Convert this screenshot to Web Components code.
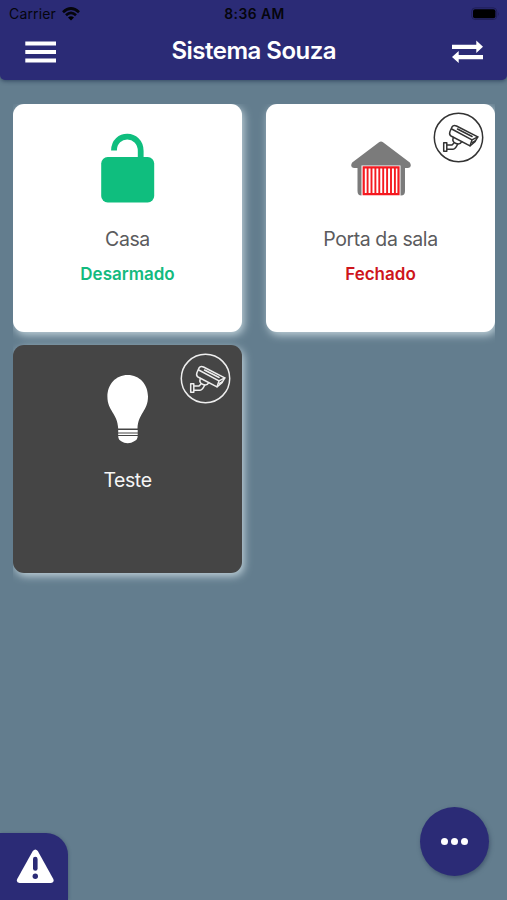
<!DOCTYPE html>
<html lang="pt-BR"><head><meta charset="utf-8"><title>Sistema Souza</title>
<style>html,body{margin:0;height:100%}body{overflow:hidden;font-family:Inter,"Liberation Sans",sans-serif}</style></head>
<body>
<home-app></home-app>
<script>
const define = (name, html) => customElements.define(name, class extends HTMLElement {
  constructor() {
    super();
    const t = document.createElement('template');
    t.innerHTML = html;
    this.attachShadow({mode: 'open'}).append(t.content.cloneNode(true));
  }
});

define('status-bar', `<style>
:host{display:grid;grid-template-columns:1fr auto 1fr;align-items:center;height:27px;padding:0 7px 0 9px;color:#05050c;font-size:14px}
.l{display:flex;align-items:center;gap:6px;letter-spacing:.15px}.c{font-weight:600;font-size:13.800px;letter-spacing:.5px}.r{justify-self:end;display:flex}
svg{display:block}
</style>
<div class="l"><span>Carrier</span><svg width="18" height="14" viewBox="0 0 18 14"><g fill="none" stroke="#05050c" stroke-width="2.700"><path d="M1 5.200Q9-2.200 17 5.200"/><path d="M4 8.300Q9 3.600 14 8.300"/></g><path d="M6 10.400Q9 8 12 10.400L9 13.600Z"/></svg></div>
<span class="c">8:36 AM</span>
<svg class="r" width="29" height="14" viewBox="0 0 29 14"><rect x=".7" y=".9" width="25" height="11.600" rx="3.400" fill="none" stroke="#201f58"/><rect x="2" y="2.300" width="22.400" height="9" rx="2" fill="#000"/><path d="M27 5v4q1.500-2 0-4" fill="#201f58"/></svg>`);

define('nav-bar', `<style>
:host{display:grid;grid-template-columns:1fr auto 1fr;align-items:start;box-sizing:border-box;height:53px;padding:8px 24.500px 0 25px}
h1{margin:1px 0 0;color:#fff;font-size:24px;font-weight:600;line-height:30px;letter-spacing:-.5px}
svg{display:block}.l{margin-top:6px}.r{justify-self:end;margin-top:5px}
</style>
<svg class="l" width="32" height="24" viewBox="0 0 32 24"><path d="M.3 2.500H31M.3 11H31M.3 19.500H31" stroke="#fff" stroke-width="3.800"/></svg>
<h1><slot></slot></h1>
<svg class="r" width="31" height="24" viewBox="0 0 31 26" preserveAspectRatio="none" fill="#fff"><path d="M0 5.200H24.300V.5L31 7.300 24.300 14V9.700H0z"/><path d="M31 16.300H6.700V12L0 18.500 6.700 25V20.800H31z"/></svg>`);

define('camera-badge', `<style>:host{display:block;width:51px;height:51px}svg{display:block}</style>
<svg width="51" height="51" viewBox="-25.500 -25.500 51 51" fill="none" stroke="currentColor" stroke-width="1.500" stroke-linejoin="round" stroke-linecap="round">
<circle r="24.200"/>
<path d="M-6.500-10.500Q-5-13-2-11.500L19.300-.7L16.500 4.200L11.500 8.300L-7.500-1.500Q-9.600-2.800-8.600-5.800Z"/>
<path d="M-6.800-8.500L13.500 2.400L19.300-.7M13.500 2.400L11.500 8.300M-1-8.500L13.600-1M14.200 4.800L16.700 3.400"/>
<path d="M-5.200 0Q-6.800 4.500-2.500 6Q1.500 7.500 3.300 4.200"/>
<path d="M-14.800 5.200H-11.700V13.800H-14.800ZM-11.700 7.600H-6.500L-4.500 5.500M-11.700 11.700H-5.500Q-3 11.500-1 7"/></svg>`);

define('device-card', `<style>
:host{display:flex;flex-direction:column;align-items:center;position:relative;box-sizing:border-box;height:228px;padding-top:26px;border-radius:11px;background:#fff;color:#5b5b5d;box-shadow:2px 3px 9px #c0d2da}
:host([dark]){background:#454545;color:#f5f5f5}
.icon{height:80px;display:flex;align-items:center}
.name{margin-top:16px;font-size:19.500px;line-height:27px;letter-spacing:-.42px}
.state{margin-top:9px;font-size:17px;line-height:24px;font-weight:600;color:var(--state)}
.badge{position:absolute;right:11px;top:8px}
</style>
<div class="icon"><slot name="icon"></slot></div><div class="name"><slot></slot></div><div class="state"><slot name="state"></slot></div><div class="badge"><slot name="badge"></slot></div>`);

define('lock-icon', `<style>:host{display:block}svg{display:block}</style>
<svg width="54" height="80" viewBox="0 0 54 80"><rect x=".2" y="27" width="53" height="45.500" rx="6.500" fill="#0fbe7e"/><path d="M13 20.500C13 2 39.700 2 39.700 21V29" fill="none" stroke="#0fbe7e" stroke-width="5.800"/></svg>`);

define('garage-icon', `<style>:host{display:block}svg{display:block}</style>
<svg width="60" height="80" viewBox="0 0 60 80"><path d="M28 12.300Q30 10.800 32 12.300L58.800 32.500Q61.500 37 57 38H54V61Q54 65.500 50 65.500H10.500Q6.500 65.500 6.500 61V38H3Q-1.500 37 1.200 32.500Z" fill="#7b7b7b"/><path d="M10.500 35.500H49.500V66H10.500Z" fill="#fff"/><path d="M12.700 37.300H47.500V64.200H12.700Z" fill="#fff" stroke="#f51a20" stroke-width="2.200"/><path d="M16.600 38V64M20.500 38V64M24.400 38V64M28.300 38V64M32.200 38V64M36.100 38V64M40 38V64M43.900 38V64" stroke="#f51a20" stroke-width="1.900"/></svg>`);

define('bulb-icon', `<style>:host{display:block}svg{display:block}</style>
<svg width="42" height="80" viewBox="0 0 42 80" fill="#fff"><path d="M20.700 4C8.700 4 .4 13.500 .4 25.500C.4 40 10.500 42 11.200 57.500H30.500C31.200 42 41 40 41 25.500C41 13.500 32.700 4 20.700 4Z"/><path d="M11.200 59H30.700V61.500H11.200ZM11.200 62.500H30.700V64H11.200ZM11.200 65H30.700Q30.700 69 26.700 70.500Q24.700 72.300 20.700 72.300T14.700 70.500Q11.200 69 11.200 65Z"/></svg>`);

define('alert-tab', `<style>:host{display:flex;box-sizing:border-box;width:68px;height:67px;padding:16px 0 0 15.500px;background:#2b2b76;border-radius:0 22px 0 0;box-shadow:1px 0 3px #35476360}svg{display:block}</style>
<svg width="39" height="35" viewBox="0 0 39 35"><path d="M16.800 2Q19.300-1 21.800 2L37.300 30Q38.700 33.800 35 34H3.500Q-.2 33.800 1.200 30Z" fill="#fff"/><path d="M19.300 10V19.500" stroke="#2b2b76" stroke-width="4.600" stroke-linecap="round"/><circle cx="19.300" cy="27.300" r="2.700" fill="#2b2b76"/></svg>`);

define('more-button', `<style>:host{display:flex;align-items:center;justify-content:center;gap:2.600px;width:69px;height:69px;border-radius:50%;background:#2b2b76;box-shadow:1px 2px 4px #2d405a99}i{width:7.200px;height:7.200px;border-radius:50%;background:#fff}</style><i></i><i></i><i></i>`);

define('home-app', `<style>
:host{display:flex;flex-direction:column;width:507px;height:900px;background:#637d8e;overflow:hidden}
header{background:#2b2b76;border-radius:0 0 5px 5px;box-shadow:0 1px 4px #243a55cc}
main{flex:1;margin:24px 12px 0 13px;display:grid;grid-template-columns:229px 229px;column-gap:24px;row-gap:13px;align-content:start;overflow:hidden}
footer{display:flex;align-items:flex-end;justify-content:space-between;height:93px;padding-right:18px}
more-button{margin-bottom:24px}
</style>
<header><status-bar></status-bar><nav-bar>Sistema Souza</nav-bar></header>
<main>
<device-card style="--state:#13ba7e"><lock-icon slot="icon"></lock-icon>Casa<span slot="state">Desarmado</span></device-card>
<device-card style="--state:#ce151b"><garage-icon slot="icon"></garage-icon>Porta da sala<span slot="state">Fechado</span><camera-badge slot="badge" style="color:#333"></camera-badge></device-card>
<device-card dark><bulb-icon slot="icon"></bulb-icon>Teste<camera-badge slot="badge" style="color:#eee"></camera-badge></device-card>
</main>
<footer><alert-tab></alert-tab><more-button></more-button></footer>`);
</script>
</body></html>
